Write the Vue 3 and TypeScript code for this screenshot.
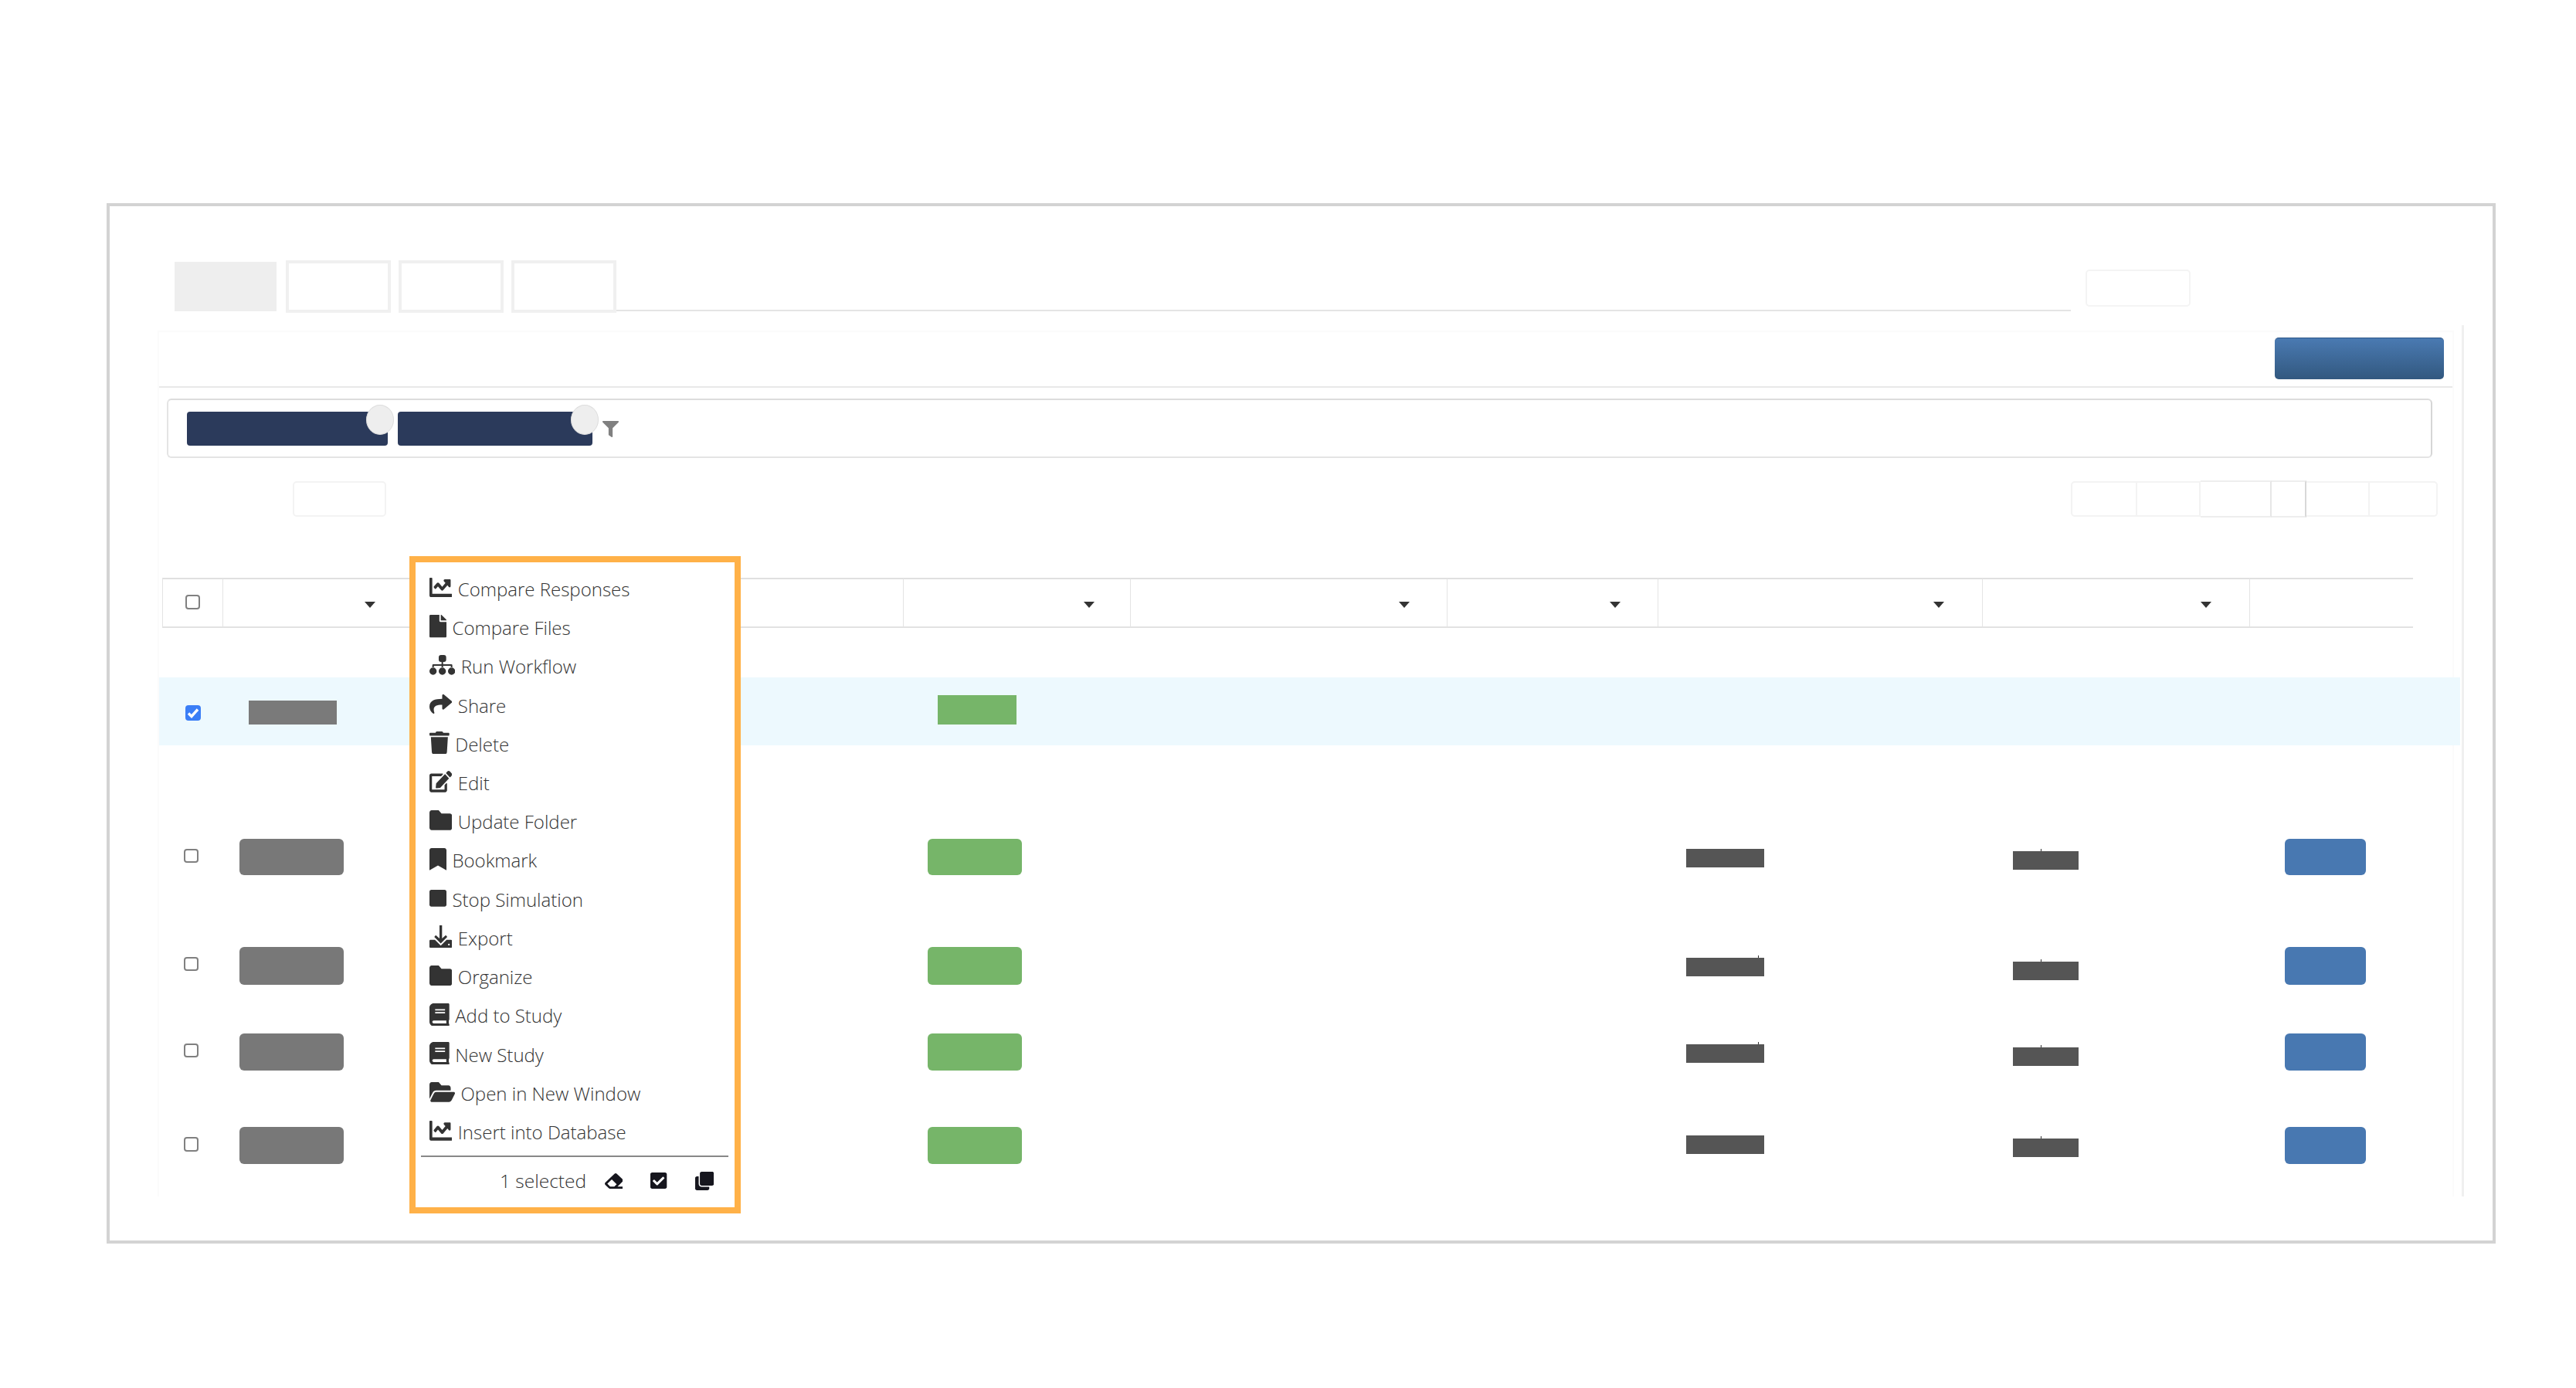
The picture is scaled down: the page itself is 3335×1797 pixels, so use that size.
<script setup lang="ts">
interface MenuIcon {
  vb: string
  w: number
  h: number
  d: string
}

interface MenuItem {
  label: string
  icon: MenuIcon
}

interface HeaderCol {
  w: number
  caretRight?: number
}

interface TableRow {
  gap: number
  check: number
  h: number
  barA: number
  barB: number
  tickA: boolean
}

const chart = 'M496 384H64V80c0-8.84-7.16-16-16-16H16C7.16 64 0 71.16 0 80v336c0 17.67 14.33 32 32 32h464c8.84 0 16-7.16 16-16v-32c0-8.84-7.16-16-16-16zM464 96H345.94c-21.38 0-32.09 25.85-16.97 40.97l32.4 32.4L288 242.75l-73.37-73.37c-12.5-12.5-32.76-12.5-45.25 0l-68.69 68.69c-6.25 6.25-6.25 16.38 0 22.63l22.62 22.62c6.25 6.25 16.38 6.25 22.63 0L192 237.25l73.37 73.37c12.5 12.5 32.76 12.5 45.25 0l96-96 32.4 32.4c15.12 15.12 40.97 4.41 40.97-16.97V112c0-8.84-7.16-16-16-16z'
const folder = 'M464 128H272l-64-64H48C21.49 64 0 85.49 0 112v288c0 26.51 21.49 48 48 48h416c26.51 0 48-21.49 48-48V176c0-26.51-21.49-48-48-48z'
const book = 'M448 360V24c0-13.3-10.7-24-24-24H96C43 0 0 43 0 96v320c0 53 43 96 96 96h328c13.3 0 24-10.7 24-24v-16c0-7.5-3.5-14.3-8.9-18.7-4.2-15.4-4.2-59.3 0-74.7 5.4-4.3 8.9-11.1 8.9-18.6zM128 134c0-3.3 2.7-6 6-6h212c3.3 0 6 2.7 6 6v20c0 3.3-2.7 6-6 6H134c-3.3 0-6-2.7-6-6v-20zm0 64c0-3.3 2.7-6 6-6h212c3.3 0 6 2.7 6 6v20c0 3.3-2.7 6-6 6H134c-3.3 0-6-2.7-6-6v-20zm253.4 250H96c-17.7 0-32-14.3-32-32 0-17.6 14.4-32 32-32h285.4c-1.9 17.1-1.9 46.9 0 64z'
const sitemap = 'M45 0h11a9 9 0 0 1 9 9v9a9 9 0 0 1-9 9H45a9 9 0 0 1-9-9V9a9 9 0 0 1 9-9zM47 27h6v9h32a4 4 0 0 1 4 4v10h-6v-8H53v8h-6v-8H17v8h-6V40a4 4 0 0 1 4-4h32zM14 49a14 14 0 1 1 0 28a14 14 0 1 1 0-28zM50 49a14 14 0 1 1 0 28a14 14 0 1 1 0-28zM86 49a14 14 0 1 1 0 28a14 14 0 1 1 0-28z'
const exportTray = 'M227 0h58v300l84-74 34 38-147 150-147-150 34-38 84 74zM0 354c0-13 11-24 24-24h100l132 134 132-134h100c13 0 24 11 24 24v134c0 13.3-10.7 24-24 24H24c-13.3 0-24-10.7-24-24zM440 420a20 20 0 1 0 0 40a20 20 0 1 0 0-40z'

const menuItems: MenuItem[] = [
  { label: 'Compare Responses', icon: { vb: '0 64 512 384', w: 29.3, h: 25, d: chart } },
  { label: 'Compare Files', icon: { vb: '0 0 384 512', w: 22, h: 29.3, d: 'M224 136V0H24C10.7 0 0 10.7 0 24v464c0 13.3 10.7 24 24 24h336c13.3 0 24-10.7 24-24V160H248c-13.2 0-24-10.8-24-24zm160-14.1v6.1H256V0h6.1c6.4 0 12.5 2.5 17 7l97.9 98c4.5 4.5 7 10.6 7 16.9z' } },
  { label: 'Run Workflow', icon: { vb: '0 0 100 77', w: 33.3, h: 25.7, d: sitemap } },
  { label: 'Share', icon: { vb: '0 32 512 448', w: 29.3, h: 25, d: 'M503.691 189.836L327.687 37.851C312.281 24.546 288 35.347 288 56.015v80.053C127.371 137.907 0 170.1 0 322.326c0 61.441 39.581 122.309 83.333 154.132 13.653 9.931 33.111-2.533 28.077-18.631C66.066 312.814 132.917 274.316 288 272.085V360c0 20.7 24.3 31.453 39.687 18.164l176.004-152c11.071-9.562 11.086-26.753 0-36.328z' } },
  { label: 'Delete', icon: { vb: '0 0 448 512', w: 25.7, h: 29.3, d: 'M432 32H312l-9.4-18.7A24 24 0 0 0 281.1 0H166.8a23.72 23.72 0 0 0-21.4 13.3L136 32H16A16 16 0 0 0 0 48v32a16 16 0 0 0 16 16h416a16 16 0 0 0 16-16V48a16 16 0 0 0-16-16zM53.2 467a48 48 0 0 0 47.9 45h245.8a48 48 0 0 0 47.9-45L416 128H32z' } },
  { label: 'Edit', icon: { vb: '0 0 576 512', w: 29.3, h: 27.7, d: 'M402.6 83.2l90.2 90.2c3.8 3.8 3.8 10 0 13.8L274.4 405.6l-92.8 10.3c-12.4 1.4-22.9-9.1-21.5-21.5l10.3-92.8L388.8 83.2c3.8-3.8 10-3.8 13.8 0zm162-22.9l-48.8-48.8c-15.2-15.2-39.9-15.2-55.2 0l-35.4 35.4c-3.8 3.8-3.8 10 0 13.8l90.2 90.2c3.8 3.8 10 3.8 13.8 0l35.4-35.4c15.2-15.3 15.2-40 0-55.2zM384 346.2V448H64V128h229.8c3.2 0 6.2-1.3 8.5-3.5l40-40c7.6-7.6 2.2-20.5-8.5-20.5H48C21.5 64 0 85.5 0 112v352c0 26.5 21.5 48 48 48h352c26.5 0 48-21.5 48-48V306.2c0-10.7-12.9-16-20.5-8.5l-40 40c-2.2 2.3-3.5 5.3-3.5 8.5z' } },
  { label: 'Update Folder', icon: { vb: '0 64 512 384', w: 29.3, h: 25.7, d: folder } },
  { label: 'Bookmark', icon: { vb: '0 0 384 512', w: 22, h: 28.7, d: 'M0 512V48C0 21.49 21.49 0 48 0h288c26.51 0 48 21.49 48 48v464L192 400 0 512z' } },
  { label: 'Stop Simulation', icon: { vb: '0 32 448 448', w: 22, h: 21.7, d: 'M400 32H48C21.5 32 0 53.5 0 80v352c0 26.5 21.5 48 48 48h352c26.5 0 48-21.5 48-48V80c0-26.5-21.5-48-48-48z' } },
  { label: 'Export', icon: { vb: '0 0 512 512', w: 29.3, h: 29, d: exportTray } },
  { label: 'Organize', icon: { vb: '0 64 512 384', w: 29.3, h: 26, d: folder } },
  { label: 'Add to Study', icon: { vb: '0 0 448 512', w: 25.7, h: 29.7, d: book } },
  { label: 'New Study', icon: { vb: '0 0 448 512', w: 25.7, h: 29.7, d: book } },
  { label: 'Open in New Window', icon: { vb: '0 64 576 384', w: 33, h: 25.7, d: 'M572.694 292.093L500.27 416.248A63.997 63.997 0 0 1 444.989 448H45.025c-18.523 0-30.064-20.093-20.731-36.093l72.424-124.155A64 64 0 0 1 152 256h399.964c18.523 0 30.064 20.093 20.73 36.093zM152 224h328v-48c0-26.51-21.49-48-48-48H272l-64-64H48C21.49 64 0 85.49 0 112v278.046l69.077-118.418C86.214 242.25 117.989 224 152 224z' } },
  { label: 'Insert into Database', icon: { vb: '0 64 512 384', w: 29.3, h: 25.7, d: chart } },
]

// last column has no caret, the second one is hidden behind the menu
const headerCols: HeaderCol[] = [
  { w: 78.5 },
  { w: 242, caretRight: 44 },
  { w: 638.7 },
  { w: 294.3, caretRight: 46 },
  { w: 409.6, caretRight: 47.6 },
  { w: 273.7, caretRight: 47.8 },
  { w: 419.4, caretRight: 48.7 },
  { w: 346.3, caretRight: 49 },
  { w: 212 },
]

const rows: TableRow[] = [
  { gap: 121, check: 12.3, h: 47, barA: 12.5, barB: 16, tickA: false },
  { gap: 91, check: 12.3, h: 49, barA: 14, barB: 19, tickA: true },
  { gap: 63, check: 12.3, h: 48, barA: 14, barB: 18, tickA: true },
  { gap: 72, check: 13, h: 48, barA: 11, barB: 15, tickA: false },
]
</script>

<template>
  <div class="frame">
    <div class="tabs">
      <div class="tab tab-active"></div>
      <div class="tab"></div>
      <div class="tab"></div>
      <div class="tab"></div>
      <div class="tab-line"></div>
      <div class="tab-action"></div>
    </div>

    <div class="panel-wrap">
      <div class="panel">
        <div class="toolbar">
          <div class="primary-btn"></div>
        </div>

        <div class="filter-box">
          <div class="chip chip-first"><span class="chip-close"></span></div>
          <div class="chip chip-second"><span class="chip-close"></span></div>
          <svg class="funnel" viewBox="0 0 512 512" width="21" height="21" preserveAspectRatio="none">
            <path d="M487.976 0H24.028C2.71 0-8.047 25.866 7.058 40.971L192 225.941V432c0 7.831 3.821 15.17 10.237 19.662l80 55.98C298.02 518.69 320 507.493 320 487.98V225.941l184.947-184.97C520.021 25.896 509.338 0 487.976 0z" />
          </svg>
        </div>

        <div class="controls">
          <div class="page-size"></div>
          <div class="pager">
            <div class="pager-cell" style="width: 86px"></div>
            <div class="pager-cell" style="width: 81.5px"></div>
            <div class="pager-cell pager-active" style="width: 92.5px"></div>
            <div class="pager-cell pager-active" style="width: 45px"></div>
            <div class="pager-cell" style="width: 82px"></div>
            <div class="pager-cell" style="width: 88px"></div>
          </div>
        </div>

        <div class="table-head">
          <div
            v-for="(col, i) in headerCols"
            :key="i"
            class="head-cell"
            :style="{ width: col.w + 'px', paddingRight: (col.caretRight ?? 0) + 'px' }"
          >
            <span v-if="i === 0" class="checkbox head-check"></span>
            <span v-if="col.caretRight" class="caret"></span>
          </div>
        </div>

        <div class="row row-selected">
          <div class="cell check-cell">
            <span class="checkbox checkbox-on">
              <svg viewBox="0 0 20 20" width="20" height="20">
                <path d="M4 10.5l4 4 8-9" fill="none" stroke="#fff" stroke-width="3.4" />
              </svg>
            </span>
          </div>
          <div class="cell"><div class="sel-gray"></div></div>
          <div class="cell"><div class="sel-green"></div></div>
        </div>

        <div
          v-for="(row, i) in rows"
          :key="i"
          class="row"
          :style="{ marginTop: row.gap + 'px' }"
        >
          <div class="cell check-cell">
            <span class="checkbox" :style="{ marginTop: row.check + 'px' }"></span>
          </div>
          <div class="cell"><div class="pill pill-gray" :style="{ height: row.h + 'px' }"></div></div>
          <div class="cell"><div class="pill pill-green" :style="{ height: row.h + 'px' }"></div></div>
          <div class="cell"></div>
          <div class="cell"></div>
          <div class="cell">
            <div class="bar bar-a" :class="{ ticked: row.tickA }" :style="{ marginTop: row.barA + 'px' }"></div>
          </div>
          <div class="cell">
            <div class="bar bar-b ticked" :style="{ marginTop: row.barB + 'px' }"></div>
          </div>
          <div class="cell"><div class="pill pill-blue" :style="{ height: row.h + 'px' }"></div></div>
        </div>
      </div>
      <div class="scroll-line"></div>
    </div>

    <div class="menu">
      <ul class="menu-list">
        <li v-for="item in menuItems" :key="item.label" class="menu-item">
          <svg
            class="menu-icon"
            :viewBox="item.icon.vb"
            :width="item.icon.w"
            :height="item.icon.h"
            preserveAspectRatio="none"
          >
            <path :d="item.icon.d" fill-rule="evenodd" />
          </svg>
          <span class="menu-label">{{ item.label }}</span>
        </li>
      </ul>
      <div class="menu-footer">
        <span class="selected-count">1 selected</span>
        <svg class="foot-icon foot-eraser" viewBox="0 32 512 448" width="23.7" height="20" preserveAspectRatio="none">
          <path d="M497.941 273.941c18.745-18.745 18.745-49.137 0-67.882l-160-160c-18.745-18.745-49.136-18.746-67.883 0l-256 256c-18.745 18.745-18.745 49.137 0 67.882l96 96A48.004 48.004 0 0 0 144 480h356c6.627 0 12-5.373 12-12v-40c0-6.627-5.373-12-12-12H355.883l142.058-142.059zm-302.627-62.627l137.373 137.373L265.373 416H150.628l-80-80 124.686-124.686z" />
        </svg>
        <svg class="foot-icon foot-check" viewBox="0 32 448 448" width="21.3" height="21" preserveAspectRatio="none">
          <path d="M400 480H48c-26.51 0-48-21.49-48-48V80c0-26.51 21.49-48 48-48h352c26.51 0 48 21.49 48 48v352c0 26.51-21.49 48-48 48zm-204.686-98.059l184-184c6.248-6.248 6.248-16.379 0-22.627l-22.627-22.627c-6.248-6.248-16.379-6.249-22.628 0L184 302.745l-70.059-70.059c-6.248-6.248-16.379-6.248-22.628 0l-22.627 22.627c-6.248 6.248-6.248 16.379 0 22.627l104 104c6.249 6.25 16.379 6.25 22.628.001z" />
        </svg>
        <svg class="foot-icon foot-clone" viewBox="0 0 512 512" width="24.3" height="24" preserveAspectRatio="none">
          <path d="M464 0c26.51 0 48 21.49 48 48v288c0 26.51-21.49 48-48 48H176c-26.51 0-48-21.49-48-48V48c0-26.51 21.49-48 48-48h288M176 416c-44.112 0-80-35.888-80-80V128H48c-26.51 0-48 21.49-48 48v288c0 26.51 21.49 48 48 48h288c26.51 0 48-21.49 48-48v-48H176z" />
        </svg>
      </div>
    </div>
  </div>
</template>

<style scoped>
.frame {
  position: relative;
  box-sizing: border-box;
  width: 3093px;
  height: 1347px;
  margin: 263px 0 0 138px;
  border: 4px solid #d3d3d3;
  background: #fff;
}

/* tabs */
.tabs {
  display: flex;
  align-items: flex-start;
  height: 68px;
  margin: 70px 0 0 84px;
}

.tab {
  box-sizing: border-box;
  width: 136px;
  height: 68px;
  margin-left: 10px;
  border: 4px solid #f0f0f0;
}

.tab-active {
  width: 132px;
  height: 64px;
  margin: 2px 2px 0 0;
  border: 0;
  background: #eee;
}

.tab-line {
  width: 1883px;
  height: 2px;
  margin-top: 64px;
  background: #e4e4e4;
}

.tab-action {
  box-sizing: border-box;
  width: 136px;
  height: 48px;
  margin: 12px 0 0 19px;
  border: 2px solid #f4f4f4;
  border-radius: 5px;
}

/* panel */
.panel-wrap {
  display: flex;
  align-items: flex-start;
  margin: 16px 0 0 62px;
}

.panel {
  box-sizing: border-box;
  width: 2973px;
  height: 1121px;
  margin-top: 7px;
  border: 2px solid #fbfbfb;
  border-bottom: 0;
}

.scroll-line {
  width: 3px;
  height: 1128px;
  margin-left: 10px;
  background: #f0f0f0;
}

.toolbar {
  display: flex;
  justify-content: flex-end;
  box-sizing: border-box;
  height: 72px;
  padding: 7px 11px 0 0;
  border-bottom: 2px solid #e8e8e8;
}

.primary-btn {
  width: 219.4px;
  height: 53.4px;
  border-top: 1px solid #2c5688;
  border-radius: 5px;
  background: linear-gradient(#4a7ab2, #32587f);
}

/* filter */
.filter-box {
  display: flex;
  align-items: flex-start;
  box-sizing: border-box;
  width: 2932.5px;
  height: 76.6px;
  margin: 14px 0 0 10px;
  padding: 15px 0 0 24px;
  border: 2px solid #e4e4e4;
  border-top-color: #dcdcdc;
  border-right-color: #d6d6d6;
  border-radius: 6px;
}

.chip {
  position: relative;
  height: 43.7px;
  border-radius: 4px;
  background: #2b3a5b;
}

.chip-first {
  width: 260px;
}

.chip-second {
  width: 252px;
  margin-left: 13px;
}

.chip-close {
  position: absolute;
  top: -9px;
  right: -8px;
  box-sizing: border-box;
  width: 36px;
  height: 38.5px;
  border: 1px solid #ddd;
  border-radius: 50%;
  background: #eee;
}

.funnel {
  margin: 12px 0 0 13px;
  fill: #808080;
}

/* page size and pager */
.controls {
  display: flex;
  justify-content: space-between;
  height: 46px;
  margin-top: 30.7px;
  padding: 0 19px 0 172.5px;
}

.page-size {
  box-sizing: border-box;
  width: 121.5px;
  height: 46px;
  border: 2px solid #f3f3f3;
  border-radius: 5px;
}

.pager {
  display: flex;
  height: 46px;
}

.pager-cell {
  box-sizing: border-box;
  border: 2px solid #f3f3f3;
  border-left-width: 0;
}

.pager-cell:first-child {
  border-left-width: 2px;
  border-radius: 5px 0 0 5px;
}

.pager-cell:last-child {
  border-radius: 0 5px 5px 0;
}

.pager-active {
  height: 48px;
  margin-top: -1px;
  border-color: #eee;
  border-right-color: #e6e6e6;
}

.pager-active + .pager-active {
  border-right-color: #d8d8d8;
}

/* table */
.table-head {
  display: flex;
  height: 65px;
  margin: 79px 0 0 3.5px;
}

.head-cell {
  display: flex;
  align-items: center;
  justify-content: flex-end;
  box-sizing: border-box;
  flex: none;
  border-top: 2px solid #e0e0e0;
  border-bottom: 2px solid #e2e2e2;
  border-left: 1.5px solid #e4e4e4;
}

.head-cell:nth-child(3) {
  border-left: 0;
}

.head-check {
  margin: -2px 29px 0 0;
}

.caret {
  width: 0;
  height: 0;
  margin-top: 5px;
  border-top: 8px solid #333;
  border-right: 7px solid transparent;
  border-left: 7px solid transparent;
}

.row {
  display: grid;
  grid-template-columns: 82px 880.7px 294.3px 409.6px 273.7px 419.4px 346.3px 273px;
  width: 2979px;
  height: 49px;
}

.row-selected {
  height: 88px;
  margin-top: 64px;
  background: #edf9fe;
}

.cell {
  min-width: 0;
}

.check-cell {
  padding-left: 32px;
}

.checkbox {
  display: block;
  box-sizing: border-box;
  width: 18.7px;
  height: 18.7px;
  border: 2px solid #808080;
  border-radius: 4px;
  background: #fff;
}

.checkbox-on {
  width: 20px;
  height: 20px;
  margin: 36px 0 0 2px;
  border: 0;
  background: #3b7ef6;
}

.checkbox-on svg {
  display: block;
}

.sel-gray {
  width: 114px;
  height: 31px;
  margin: 30px 0 0 34px;
  background: #7a7a7a;
}

.sel-green {
  width: 101.6px;
  height: 38px;
  margin: 23px 0 0 45.3px;
  background: #76b569;
}

.pill {
  border-radius: 6px;
}

.pill-gray {
  width: 135px;
  margin-left: 22px;
  background: #787878;
}

.pill-green {
  width: 122px;
  margin-left: 32.3px;
  background: #76b569;
}

.pill-blue {
  width: 105.5px;
  margin-left: 46px;
  background: #4878b1;
}

.bar {
  position: relative;
  height: 24px;
  background: #555;
}

.bar-a {
  width: 100.5px;
  margin-left: 37.2px;
}

.bar-b {
  width: 85px;
  margin-left: 40.3px;
}

.bar.ticked::before {
  content: '';
  position: absolute;
  top: -3px;
  width: 1px;
  height: 3px;
  background: #333;
}

.bar-a.ticked::before {
  left: 93px;
}

.bar-b.ticked::before {
  left: 36px;
}

/* selection menu */
.menu {
  position: absolute;
  top: 453px;
  left: 388px;
  z-index: 2;
  box-sizing: border-box;
  width: 428.7px;
  height: 851.3px;
  padding: 11.8px 8px 0 7px;
  border: 8px solid #ffb148;
  background: #fff;
  color: #333;
  font-family: 'Open Sans', sans-serif;
  font-size: 24px;
  font-weight: 300;
}

.menu-list {
  display: flex;
  flex-direction: column;
  gap: 8.24px;
  margin: 0;
  padding: 0 0 0 11px;
  list-style: none;
}

.menu-item {
  display: flex;
  align-items: center;
  gap: 7.5px;
  height: 42px;
  white-space: nowrap;
}

.menu-label {
  padding-top: 3px;
}

.menu-icon {
  flex: none;
  fill: #333;
}

.menu-footer {
  display: flex;
  align-items: center;
  height: 62px;
  margin-top: 10.5px;
  padding-left: 102px;
  border-top: 2.3px solid #888;
  font-size: 24.5px;
}

.selected-count {
  width: 109.4px;
  white-space: nowrap;
}

.foot-icon {
  flex: none;
  fill: #16161e;
}

.foot-eraser {
  margin-left: 26.3px;
}

.foot-check {
  margin-left: 36px;
}

.foot-clone {
  margin-left: 36.3px;
}
</style>

<style>
html,
body {
  margin: 0;
  background: #fff;
}
</style>
